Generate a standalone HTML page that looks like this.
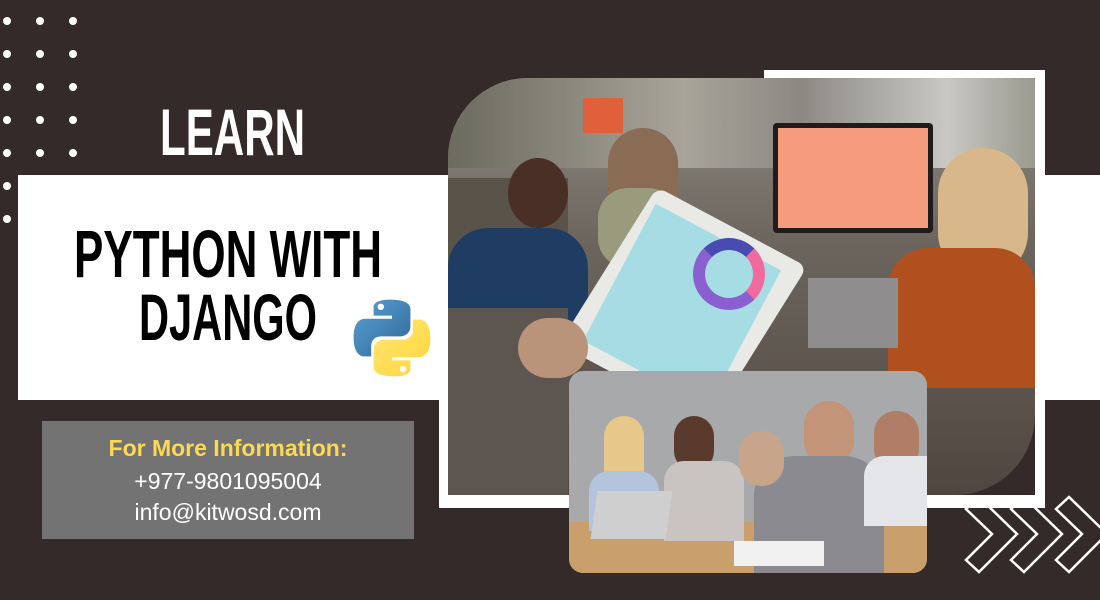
<!DOCTYPE html>
<html><head><meta charset="utf-8"><style>
html,body{margin:0;padding:0}
body{width:1100px;height:600px;background:#342a29;position:relative;overflow:hidden;font-family:"Liberation Sans",sans-serif}
.abs{position:absolute}
.dot{position:absolute;width:8px;height:8px;border-radius:50%;background:#fff}
</style></head><body>
<div class="dot" style="left:3px;top:17px"></div><div class="dot" style="left:36px;top:17px"></div><div class="dot" style="left:69px;top:17px"></div>
<div class="dot" style="left:3px;top:50px"></div><div class="dot" style="left:36px;top:50px"></div><div class="dot" style="left:69px;top:50px"></div>
<div class="dot" style="left:3px;top:83px"></div><div class="dot" style="left:36px;top:83px"></div><div class="dot" style="left:69px;top:83px"></div>
<div class="dot" style="left:3px;top:116px"></div><div class="dot" style="left:36px;top:116px"></div><div class="dot" style="left:69px;top:116px"></div>
<div class="dot" style="left:3px;top:149px"></div><div class="dot" style="left:36px;top:149px"></div><div class="dot" style="left:69px;top:149px"></div>
<div class="dot" style="left:3px;top:182px"></div><div class="dot" style="left:3px;top:215px"></div>

<!-- white band -->
<div class="abs" style="left:18px;top:175px;width:1082px;height:225px;background:#fff"></div>
<!-- white frame pieces -->
<div class="abs" style="left:439px;top:175px;width:606px;height:333px;background:#fff"></div>
<div class="abs" style="left:764px;top:70px;width:281px;height:105px;background:#fff"></div>
<div class="abs" style="left:448px;top:175px;width:587px;height:320px;background:#342a29"></div>

<!-- top photo -->
<div class="abs" style="left:448px;top:78px;width:587px;height:417px;border-radius:80px 0 80px 0;overflow:hidden;background:linear-gradient(180deg,#8d8a84 0%,#6c655d 40%,#4f4640 100%)">
  <div class="abs" style="left:0;top:0;width:587px;height:90px;background:linear-gradient(90deg,#6b6a5e,#a8a49a 40%,#8c8983 60%,#c9c8c2 85%,#9a9a90)"></div>
  <div class="abs" style="left:135px;top:20px;width:40px;height:35px;background:#e0603c"></div>
  <div class="abs" style="left:0;top:100px;width:120px;height:300px;background:#5a534a"></div>
  <div class="abs" style="left:60px;top:80px;width:60px;height:70px;border-radius:50%;background:#4a2f26"></div>
  <div class="abs" style="left:0;top:150px;width:140px;height:120px;border-radius:40px 40px 0 0;background:#1f3d63"></div>
  <div class="abs" style="left:160px;top:50px;width:70px;height:140px;border-radius:35px;background:#8a6b54"></div>
  <div class="abs" style="left:150px;top:110px;width:80px;height:80px;border-radius:30px;background:#9a9b7c"></div>
  <div class="abs" style="left:325px;top:45px;width:160px;height:110px;background:#1e1c1c;border-radius:4px"></div>
  <div class="abs" style="left:330px;top:50px;width:150px;height:100px;background:#f59b7e"></div>
  <div class="abs" style="left:490px;top:70px;width:90px;height:130px;border-radius:45px;background:#d8b88a"></div>
  <div class="abs" style="left:440px;top:170px;width:147px;height:140px;border-radius:40px 40px 0 0;background:#b1501f"></div>
  <div class="abs" style="left:360px;top:200px;width:90px;height:70px;background:#8f8d8e"></div>
  <div class="abs" style="left:0;top:230px;width:120px;height:190px;background:#5d5550"></div>
  <div class="abs" style="left:150px;top:135px;width:170px;height:185px;background:#e9e9e6;border-radius:10px;transform:rotate(28deg) skewX(-4deg)"></div>
  <div class="abs" style="left:163px;top:150px;width:142px;height:155px;background:#a6dde4;transform:rotate(28deg)"></div>
  <div class="abs" style="left:245px;top:160px;width:48px;height:48px;border-radius:50%;border:12px solid #8a5fd0;border-right-color:#f06aa0;border-top-color:#4a4bb0"></div>
  <div class="abs" style="left:70px;top:240px;width:70px;height:60px;border-radius:30px;background:#b9937a"></div>
</div>

<!-- bottom photo -->
<div class="abs" style="left:569px;top:371px;width:358px;height:202px;border-radius:14px;overflow:hidden;background:#a7a9ab">
  <div class="abs" style="left:0;top:150px;width:358px;height:52px;background:#c99f6b"></div>
  <div class="abs" style="left:35px;top:45px;width:40px;height:75px;border-radius:20px;background:#e8c78a"></div>
  <div class="abs" style="left:20px;top:100px;width:70px;height:60px;border-radius:20px 20px 0 0;background:#b3c4dc"></div>
  <div class="abs" style="left:105px;top:45px;width:40px;height:55px;border-radius:20px;background:#5a3a2c"></div>
  <div class="abs" style="left:95px;top:90px;width:80px;height:80px;border-radius:20px 20px 0 0;background:#c9c4c2"></div>
  <div class="abs" style="left:25px;top:120px;width:75px;height:48px;background:#cfcfd0;transform:skewX(-8deg)"></div>
  <div class="abs" style="left:235px;top:30px;width:50px;height:65px;border-radius:25px;background:#c39478"></div>
  <div class="abs" style="left:185px;top:85px;width:130px;height:117px;border-radius:40px 40px 0 0;background:#8a8a90"></div>
  <div class="abs" style="left:305px;top:40px;width:45px;height:60px;border-radius:22px;background:#b07e66"></div>
  <div class="abs" style="left:295px;top:85px;width:63px;height:70px;border-radius:20px 0 0 0;background:#e4e6ea"></div>
  <div class="abs" style="left:170px;top:60px;width:45px;height:55px;border-radius:22px;background:#c8a48a"></div>
  <div class="abs" style="left:165px;top:170px;width:90px;height:25px;background:#f1f1f1"></div>
</div>

<svg class="abs" style="left:0;top:0" width="450" height="400">
  <text x="160" y="155" textLength="145" lengthAdjust="spacingAndGlyphs" font-family="Liberation Sans" font-weight="bold" font-size="66" fill="#fff">LEARN</text>
  <text x="74" y="277" textLength="308" lengthAdjust="spacingAndGlyphs" font-family="Liberation Sans" font-weight="bold" font-size="67" fill="#000">PYTHON WITH</text>
  <text x="139" y="340" textLength="178" lengthAdjust="spacingAndGlyphs" font-family="Liberation Sans" font-weight="bold" font-size="66" fill="#000">DJANGO</text>
</svg>

<svg class="abs" style="left:352px;top:298px" width="80" height="80" viewBox="0 0 100 100">
  <defs>
    <linearGradient id="b" x1="0" y1="0" x2="1" y2="1"><stop offset="0" stop-color="#5a9fd4"/><stop offset="1" stop-color="#306998"/></linearGradient>
    <linearGradient id="y" x1="0" y1="0" x2="1" y2="1"><stop offset="0" stop-color="#ffe873"/><stop offset="1" stop-color="#ffd43b"/></linearGradient>
  </defs>
  <path fill="url(#b)" d="M48,2C26,2 27,11 27,11L27,22L50,22L50,26L17,26C17,26 2,24 2,49C2,74 15,73 15,73L24,73L24,61C24,61 23,48 37,48L60,48C60,48 73,48 73,35L73,14C73,14 75,2 48,2Z"/>
  <circle cx="36" cy="11" r="4" fill="#fff"/>
  <path fill="url(#y)" d="M52,98C74,98 73,89 73,89L73,78L50,78L50,74L83,74C83,74 98,76 98,51C98,26 85,27 85,27L76,27L76,39C76,39 77,52 63,52L40,52C40,52 27,52 27,65L27,86C27,86 25,98 52,98Z"/>
  <circle cx="64" cy="89" r="4" fill="#fff"/>
</svg>

<div class="abs" style="left:42px;top:421px;width:372px;height:118px;background:#737373;text-align:center;color:#fff;line-height:1">
  <div style="margin-top:16px;font-weight:bold;font-size:23px;color:#fcd951">For More Information:</div>
  <div style="margin-top:10px;font-size:23px">+977-9801095004</div>
  <div style="margin-top:8px;font-size:23px">info@kitwosd.com</div>
</div>

<svg class="abs" style="left:0;top:0" width="1100" height="600">
  <g fill="none" stroke="#fff" stroke-width="2.5">
    <polygon points="966,509 979,497 1017,534 979,572 966,560 992,534"/>
    <polygon points="1011,509 1024,497 1062,534 1024,572 1011,560 1037,534"/>
    <polygon points="1056,509 1069,497 1107,534 1069,572 1056,560 1082,534"/>
  </g>
</svg>
</body></html>
